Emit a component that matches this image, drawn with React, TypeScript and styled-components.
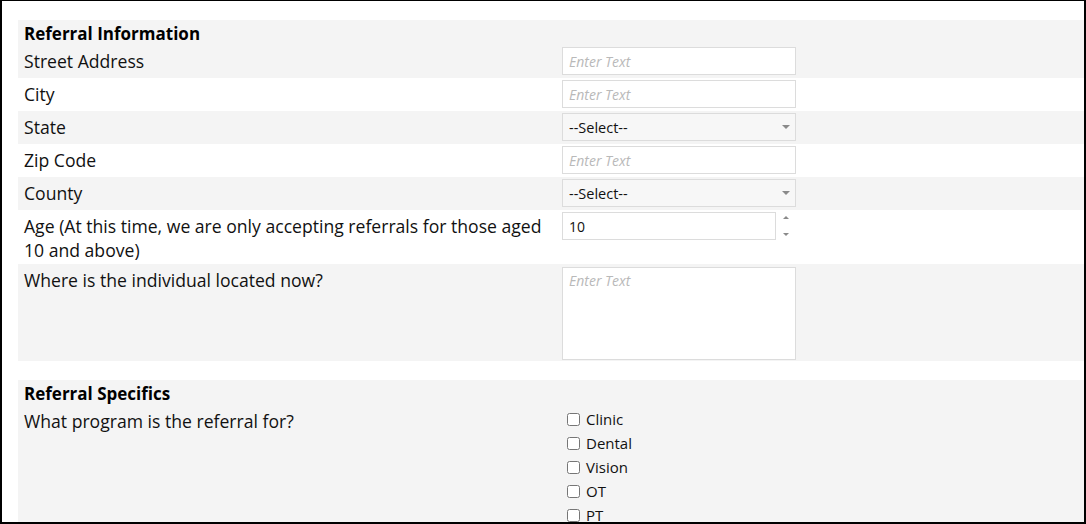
import styled, { createGlobalStyle } from 'styled-components';

const GlobalStyle = createGlobalStyle`
    html, body {
        margin: 0;
        padding: 0;
        background: #ffffff;
    }
    body {
        font-family: "Open Sans", "Noto Sans", Arial, sans-serif;
        color: #111111;
    }
    `;

const Frame = styled.div`
    box-sizing: border-box;
    width: 1086px;
    height: 524px;
    border: 2px solid #000000;
    border-top-width: 1px;
    overflow: hidden;
    padding: 19px 0 0 16px;
    `;

const Section = styled.section`
    background-color: #f4f4f4;
    margin-bottom: 19px;
    `;

const Heading = styled.h3`
    margin: 0;
    padding: 2px 6px 0;
    font-size: 17px;
    font-weight: 700;
    line-height: 23px;
    color: #000000;
    `;

const Row = styled.div<{ $white?: boolean }>`
    display: grid;
    grid-template-columns: 538px 1fr;
    background-color: ${(p) => (p.$white ? '#ffffff' : '#f4f4f4')};
    padding-left: 6px;
    min-height: 33px;
    `;

const Label = styled.div`
    font-size: 17.6px;
    line-height: 24px;
    color: #111111;
    padding: 4px 8px 2px 0;
    `;

const Field = styled.div`
    padding: 2px 0 3px;
    display: flex;
    align-items: flex-start;
    `;

const TextInput = styled.input`
    box-sizing: border-box;
    width: 234px;
    height: 28px;
    border: 1px solid #dcdcdc;
    background: #ffffff;
    padding: 0 6px;
    font-family: inherit;
    font-size: 14px;
    color: #111111;
    outline: none;
    &::placeholder {
        color: #b9b9b9;
        font-style: italic;
    }
    `;

const NumberInput = styled(TextInput)`
    width: 214px;
    -moz-appearance: textfield;
    &::-webkit-inner-spin-button,
    &::-webkit-outer-spin-button {
        -webkit-appearance: none;
        margin: 0;
    }
    `;

const Spinner = styled.div`
    display: flex;
    flex-direction: column;
    justify-content: space-between;
    height: 20px;
    margin: 4px 0 0 7px;
    `;

const Arrow = styled.span<{ $down?: boolean }>`
    width: 0;
    height: 0;
    border-left: 3px solid transparent;
    border-right: 3px solid transparent;
    ${(p) => (p.$down ? 'border-top: 3px solid #8a8a8a;' : 'border-bottom: 3px solid #8a8a8a;')}
    `;

const SelectWrap = styled.div`
    position: relative;
    width: 234px;
    `;

const Select = styled.select`
    box-sizing: border-box;
    width: 234px;
    height: 28px;
    border: 1px solid #dcdcdc;
    background: #f7f7f7;
    padding: 0 6px;
    font-family: inherit;
    font-size: 14.5px;
    color: #111111;
    appearance: none;
    outline: none;
    `;

const Caret = styled.span`
    position: absolute;
    right: 6px;
    top: 12px;
    width: 0;
    height: 0;
    border-left: 4px solid transparent;
    border-right: 4px solid transparent;
    border-top: 4px solid #8a8a8a;
    pointer-events: none;
    `;

const TextArea = styled.textarea`
    box-sizing: border-box;
    width: 234px;
    height: 93px;
    margin: 1px 0 -2px;
    border: 1px solid #dcdcdc;
    background: #ffffff;
    padding: 3px 6px;
    font-family: inherit;
    font-size: 14px;
    resize: none;
    outline: none;
    &::placeholder {
        color: #b9b9b9;
        font-style: italic;
    }
    `;

const CheckList = styled.div`
    display: flex;
    flex-direction: column;
    padding: 2px 0 0 5px;
    `;

const CheckItem = styled.label`
    display: flex;
    align-items: center;
    height: 24px;
    font-size: 15px;
    color: #111111;
    input {
        width: 13px;
        height: 13px;
        margin: 0 6px 0 0;
    }
    `;

const rows = [
    { label: 'Street Address', kind: 'text' },
    { label: 'City', kind: 'text' },
    { label: 'State', kind: 'select' },
    { label: 'Zip Code', kind: 'text' },
    { label: 'County', kind: 'select' },
    { label: 'Age (At this time, we are only accepting referrals for those aged 10 and above)', kind: 'number' },
    { label: 'Where is the individual located now?', kind: 'area' },
];

const programs = ['Clinic', 'Dental', 'Vision', 'OT', 'PT', 'Speech'];

function Control({ kind }: { kind: string }) {
    if (kind === 'select') {
        return (
            <SelectWrap>
                <Select defaultValue="">
                    <option value="">--Select--</option>
                </Select>
                <Caret />
            </SelectWrap>
        );
    }
    if (kind === 'number') {
        return (
            <>
                <NumberInput type="number" defaultValue={10} />
                <Spinner>
                    <Arrow />
                    <Arrow $down />
                </Spinner>
            </>
        );
    }
    if (kind === 'area') {
        return <TextArea placeholder="Enter Text" />;
    }
    return <TextInput type="text" placeholder="Enter Text" />;
}

export default function App() {
    return (
        <>
            <GlobalStyle />
            <Frame>
                <Section>
                    <Heading>Referral Information</Heading>
                    {rows.map((row, i) => (
                        <Row key={row.label} $white={i % 2 === 1}>
                            <Label>{row.label}</Label>
                            <Field>
                                <Control kind={row.kind} />
                            </Field>
                        </Row>
                    ))}
                </Section>

                <Section>
                    <Heading>Referral Specifics</Heading>
                    <Row>
                        <Label>What program is the referral for?</Label>
                        <CheckList>
                            {programs.map((p) => (
                                <CheckItem key={p}>
                                    <input type="checkbox" />
                                    {p}
                                </CheckItem>
                            ))}
                        </CheckList>
                    </Row>
                </Section>
            </Frame>
        </>
    );
}
